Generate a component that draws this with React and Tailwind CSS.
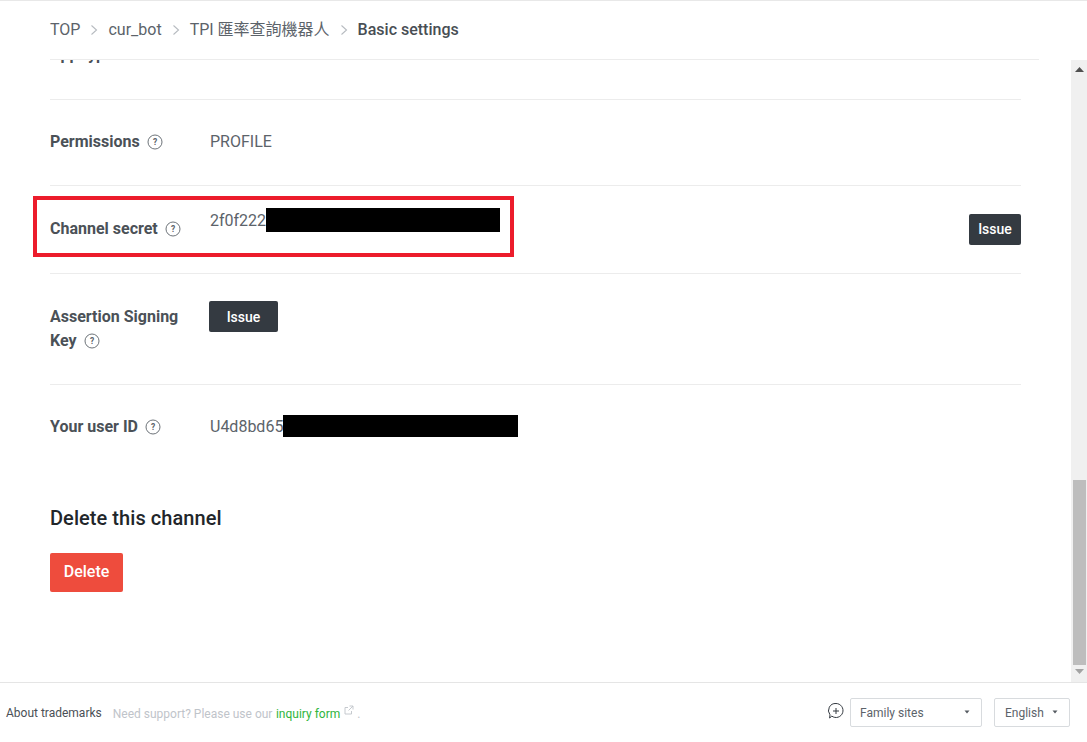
import React from "react";

const Help = () => (
  <svg width="16" height="16" viewBox="0 0 16 16" fill="none" className="shrink-0 text-[#5c636a]">
    <circle cx="8" cy="8" r="7" stroke="currentColor" strokeWidth="0.9" />
    <text x="8" y="11" textAnchor="middle" fontSize="8.5" fontFamily="Roboto" fill="currentColor">?</text>
  </svg>
);

const Chevron = () => (
  <svg width="8" height="12" viewBox="0 0 8 12" fill="none" className="mx-[10px] text-[#b7bbc0]">
    <path d="M1.5 1.5L6.5 6L1.5 10.5" stroke="currentColor" strokeWidth="1.1" />
  </svg>
);

const Caret = () => (
  <svg width="6" height="4" viewBox="0 0 6 4" className="-mt-[2px]"><path d="M0.5 0.5H5.5L3 3.5Z" fill="#555b61" /></svg>
);

const Dark = ({ className, children }) => (
  <button className={`bg-[#343a41] text-white text-[14px] font-medium rounded-[2px] flex items-center justify-center ${className}`}>{children}</button>
);

export default function App() {
  return (
    <div className="h-[742px] w-[1087px] overflow-hidden flex flex-col bg-white text-[16px] text-[#5c636a] font-['Roboto','Noto_Sans_CJK_TC',sans-serif] relative">
      <header className="h-[60px] border-t border-[#e8e8e8] shrink-0 pl-[50px] pr-[48px] relative z-10 bg-white">
        <div className="h-[59px] border-b border-[#ececec] flex items-center">
          <span>TOP</span>
          <Chevron />
          <span>cur_bot</span>
          <Chevron />
          <span>TPI 匯率查詢機器人</span>
          <Chevron />
          <span className="text-[#484e54] font-medium">Basic settings</span>
        </div>
      </header>

      <div className="flex flex-1 min-h-0">
        <main className="flex-1 min-w-0 overflow-hidden pl-[50px] pr-[50px]">
          <div className="h-[40px] border-b border-[#ececec] overflow-hidden">
            <div className="-mt-[17px] font-bold text-[#4b5157]">App type</div>
          </div>

          <div className="h-[86px] border-b border-[#ececec] flex items-center pb-[1px]">
            <div className="w-[160px] flex items-center gap-[7px] font-bold text-[#4b5157]">Permissions <Help /></div>
            <div>PROFILE</div>
          </div>

          <div className="h-[88px] border-b border-[#ececec] flex items-center">
            <div className="w-[160px] flex items-center gap-[7px] font-bold text-[#4b5157] pb-[2px]">Channel secret <Help /></div>
            <div className="flex items-center flex-1 -mt-[20px]">
              <span className="pt-[2px]">2f0f222</span>
              <span className="w-[234px] h-[24px] bg-black" />
            </div>
            <Dark className="w-[52px] h-[31px]">Issue</Dark>
          </div>

          <div className="h-[111px] border-b border-[#ececec] pt-[27px] flex items-start">
            <div className="w-[159px] font-bold text-[#4b5157] leading-[24px] pt-[4px]">
              <div>Assertion Signing</div>
              <div className="flex items-center gap-[7px]">Key <Help /></div>
            </div>
            <Dark className="w-[69px] h-[31px] pt-[1px]">Issue</Dark>
          </div>

          <div className="h-[88px] flex items-center pb-[5px]">
            <div className="w-[160px] flex items-center gap-[7px] font-bold text-[#4b5157]">Your user ID <Help /></div>
            <div className="flex items-center">
              <span>U4d8bd65</span>
              <span className="w-[235px] h-[22px] bg-black -mt-[2px]" />
            </div>
          </div>

          <h2 className="mt-[32px] text-[20px] leading-[26px] font-medium tracking-[0.06px] text-[#22262a]">Delete this channel</h2>
          <button className="mt-[22px] w-[73px] h-[39px] pb-[2px] bg-[#ee4c3d] text-white font-medium rounded-[2px]">Delete</button>
        </main>

        <aside className="w-[16px] bg-[#f0f0f0] flex flex-col items-center justify-between shrink-0 pt-[7px] pb-[8px]">
          <svg width="9" height="5" viewBox="0 0 9 5"><path d="M0 5L4.5 0L9 5Z" fill="#505050" /></svg>
          <div className="flex flex-col items-center w-full">
            <div className="w-[13px] h-[185px] bg-[#bdbdbd] mb-[4px] ml-px" />
            <svg width="9" height="5" viewBox="0 0 9 5"><path d="M0 0L4.5 5L9 0Z" fill="#a3a3a3" /></svg>
          </div>
        </aside>
      </div>

      <footer className="h-[60px] shrink-0 border-t border-[#e5e5e5] flex items-center pl-[6px] pr-[17px] text-[12px]">
        <span className="text-[#4a5056]">About trademarks</span>
        <span className="ml-[11px] pt-[2px] text-[#bfc4ca]">Need support? Please use our</span>
        <span className="ml-[3.5px] pt-[2px] text-[#2fb53c]">inquiry form</span>
        <svg width="10" height="10" viewBox="0 0 10 10" fill="none" stroke="#bfc4ca" strokeWidth="0.9" className="ml-[4px] -mt-[5px]">
          <path d="M7.5 6V9H1V2.5H4M5.5 1H9V4.5M9 1L4.5 5.5" />
        </svg>
        <span className="ml-[3px] pt-[2px] text-[#bfc4ca]">.</span>
        <div className="ml-auto flex items-center">
          <svg width="18" height="18" viewBox="0 0 18 18" fill="none" stroke="#343a41" strokeWidth="1" className="-mt-[3px] mr-[5px]">
            <path d="M9 1.5a7 7 0 1 1-4.2 12.6L2.6 16l.4-3.2A7 7 0 0 1 9 1.5Z" />
            <path d="M9 6v6M6 9h6" />
          </svg>
          <div className="w-[132px] h-[29px] border border-[#d8dbde] rounded-[2px] flex items-center justify-between pl-[9px] pr-[11px] text-[#5c636a]">
            <span>Family sites</span><Caret />
          </div>
          <div className="ml-[12px] w-[76px] h-[29px] border border-[#d8dbde] rounded-[2px] flex items-center justify-between pl-[10px] pr-[11px] text-[#5c636a]">
            <span>English</span><Caret />
          </div>
        </div>
      </footer>

      <div className="absolute left-[33px] top-[196px] w-[481px] h-[61px] border-[4px] border-[#ec1c2b]" />
    </div>
  );
}
